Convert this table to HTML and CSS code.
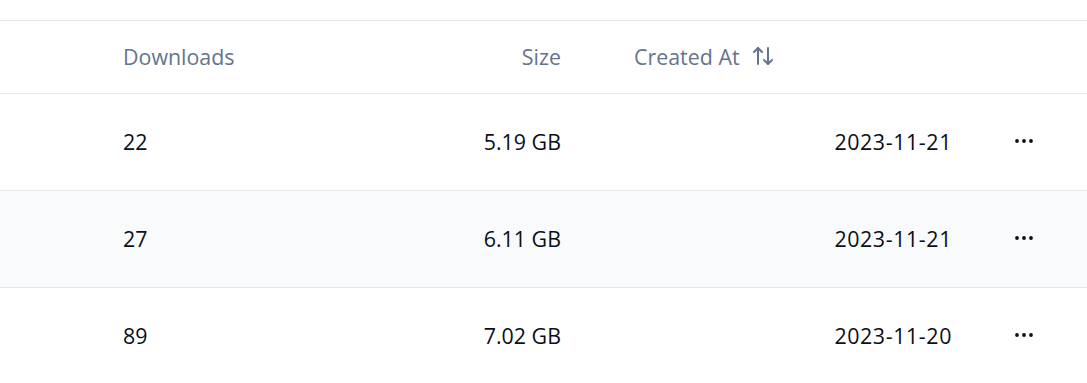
FILE: index.html
```html
<!DOCTYPE html>
<html>
<head>
<meta charset="utf-8">
<link rel="stylesheet" href="styles.css">
</head>
<body>
<div class="table">
  <div class="row head">
    <div class="cell c0"></div>
    <div class="cell c1">Downloads</div>
    <div class="cell c2">Size</div>
    <div class="cell c3"><span class="sortbtn">Created At
      <svg class="sort" viewBox="0 0 24 24" width="24" height="24" fill="none" stroke="currentColor" stroke-width="2" stroke-linecap="round" stroke-linejoin="round"><path d="m21 16-4 4-4-4"/><path d="M17 20V4"/><path d="m3 8 4-4 4 4"/><path d="M7 4v16"/></svg></span></div>
    <div class="cell c4"></div>
  </div>
  <div class="row">
    <div class="cell c0"></div>
    <div class="cell c1">22</div>
    <div class="cell c2">5.19 GB</div>
    <div class="cell c3 right">2023-11-21</div>
    <div class="cell c4"><svg class="dots" viewBox="0 0 24 8" width="24" height="8"><circle cx="5" cy="4" r="1.9"/><circle cx="12" cy="4" r="1.9"/><circle cx="19" cy="4" r="1.9"/></svg></div>
  </div>
  <div class="row alt">
    <div class="cell c0"></div>
    <div class="cell c1">27</div>
    <div class="cell c2">6.11 GB</div>
    <div class="cell c3 right">2023-11-21</div>
    <div class="cell c4"><svg class="dots" viewBox="0 0 24 8" width="24" height="8"><circle cx="5" cy="4" r="1.9"/><circle cx="12" cy="4" r="1.9"/><circle cx="19" cy="4" r="1.9"/></svg></div>
  </div>
  <div class="row">
    <div class="cell c0"></div>
    <div class="cell c1">89</div>
    <div class="cell c2">7.02 GB</div>
    <div class="cell c3 right">2023-11-20</div>
    <div class="cell c4"><svg class="dots" viewBox="0 0 24 8" width="24" height="8"><circle cx="5" cy="4" r="1.9"/><circle cx="12" cy="4" r="1.9"/><circle cx="19" cy="4" r="1.9"/></svg></div>
  </div>
</div>
</body>
</html>
```

FILE: styles.css
```css
html, body {
  margin: 0;
  padding: 0;
  background: #ffffff;
}
body {
  font-family: "Open Sans", "Noto Sans", sans-serif;
  font-size: 21.4px;
  color: #0b0f19;
  padding-top: 20px;
}
.table {
  border-top: 1px solid #e5e7eb;
}
.row {
  box-sizing: border-box;
  display: grid;
  grid-template-columns: 99px 248px 238px 390px 1fr;
  height: 97px;
  padding-bottom: 2px;
  border-bottom: 1px solid #e5e7eb;
  align-items: center;
}
.row.head {
  height: 73px;
  color: #64748b;
}
.row.alt {
  background: #f9fafb;
}
.cell {
  padding: 0 24px;
  white-space: nowrap;
}
.c0 { padding: 0; }
.c2 { text-align: right; }
.c3 { padding-left: 49px; }
.c3.right { text-align: right; letter-spacing: 0.6px; padding-right: 23px; }
.c4 { padding-left: 37px; display: flex; align-items: center; }
.sortbtn {
  display: inline-flex;
  align-items: center;
  gap: 11px;
}
.sort { display: block; }
.dots { display: block; fill: #0b0f19; }
```
